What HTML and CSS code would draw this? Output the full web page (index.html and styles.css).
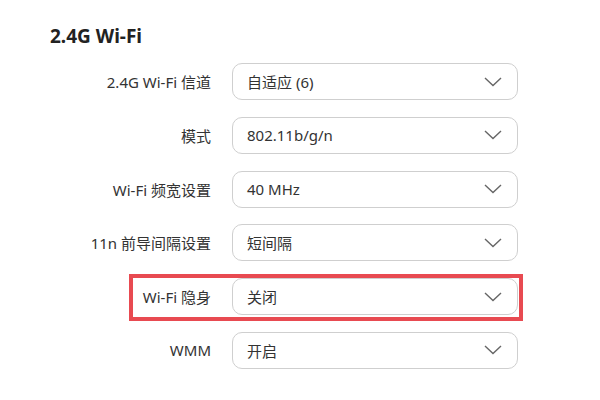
FILE: index.html
```html
<!DOCTYPE html>
<html lang="zh-CN">
<head>
<meta charset="utf-8">
<title>2.4G Wi-Fi</title>
<link rel="stylesheet" href="styles.css">
</head>
<body>
<div class="page">
  <h2 class="title">2.4G Wi-Fi</h2>
  <div class="form">
    <div class="row">
      <div class="label">2.4G Wi-Fi 信道</div>
      <div class="select"><span class="value">自适应 (6)</span><svg class="chev" width="18" height="10" viewBox="0 0 18 10"><polyline points="1,1 9,8.5 17,1" fill="none" stroke="#666" stroke-width="1.4"/></svg></div>
    </div>
    <div class="row">
      <div class="label">模式</div>
      <div class="select"><span class="value">802.11b/g/n</span><svg class="chev" width="18" height="10" viewBox="0 0 18 10"><polyline points="1,1 9,8.5 17,1" fill="none" stroke="#666" stroke-width="1.4"/></svg></div>
    </div>
    <div class="row">
      <div class="label">Wi-Fi 频宽设置</div>
      <div class="select"><span class="value">40 MHz</span><svg class="chev" width="18" height="10" viewBox="0 0 18 10"><polyline points="1,1 9,8.5 17,1" fill="none" stroke="#666" stroke-width="1.4"/></svg></div>
    </div>
    <div class="row">
      <div class="label">11n 前导间隔设置</div>
      <div class="select"><span class="value">短间隔</span><svg class="chev" width="18" height="10" viewBox="0 0 18 10"><polyline points="1,1 9,8.5 17,1" fill="none" stroke="#666" stroke-width="1.4"/></svg></div>
    </div>
    <div class="row highlight">
      <div class="label">Wi-Fi 隐身</div>
      <div class="select"><span class="value">关闭</span><svg class="chev" width="18" height="10" viewBox="0 0 18 10"><polyline points="1,1 9,8.5 17,1" fill="none" stroke="#666" stroke-width="1.4"/></svg></div>
    </div>
    <div class="row">
      <div class="label">WMM</div>
      <div class="select"><span class="value">开启</span><svg class="chev" width="18" height="10" viewBox="0 0 18 10"><polyline points="1,1 9,8.5 17,1" fill="none" stroke="#666" stroke-width="1.4"/></svg></div>
    </div>
  </div>
</div>
</body>
</html>
```
FILE: styles.css
```css
html, body {
  margin: 0;
  padding: 0;
  background: #fff;
}
body {
  font-family: "Noto Sans", "Noto Sans CJK SC", sans-serif;
  color: #333;
}
.page {
  padding: 24px 0 0 50px;
  width: 550px;
}
.title {
  margin: 0;
  font-size: 19px;
  line-height: 24px;
  font-weight: 700;
  color: #222;
}
.form {
  margin-top: 15px;
  display: flex;
  flex-direction: column;
  gap: 16.8px;
}
.row {
  position: relative;
  display: flex;
  align-items: center;
  gap: 21px;
  height: 37px;
}
.label {
  width: 161px;
  text-align: right;
  font-size: 15px;
  color: #333;
}
.select {
  box-sizing: border-box;
  width: 286px;
  height: 37px;
  border: 1px solid #cfcfcf;
  border-radius: 10px;
  display: flex;
  align-items: center;
  justify-content: space-between;
  padding: 0 15px 0 14px;
  font-size: 15px;
  color: #333;
}
.chev {
  display: block;
}
.highlight::after {
  content: "";
  position: absolute;
  box-sizing: border-box;
  left: 79px;
  top: -4px;
  width: 394px;
  height: 47px;
  border: 4px solid #e84a51;
}
```
